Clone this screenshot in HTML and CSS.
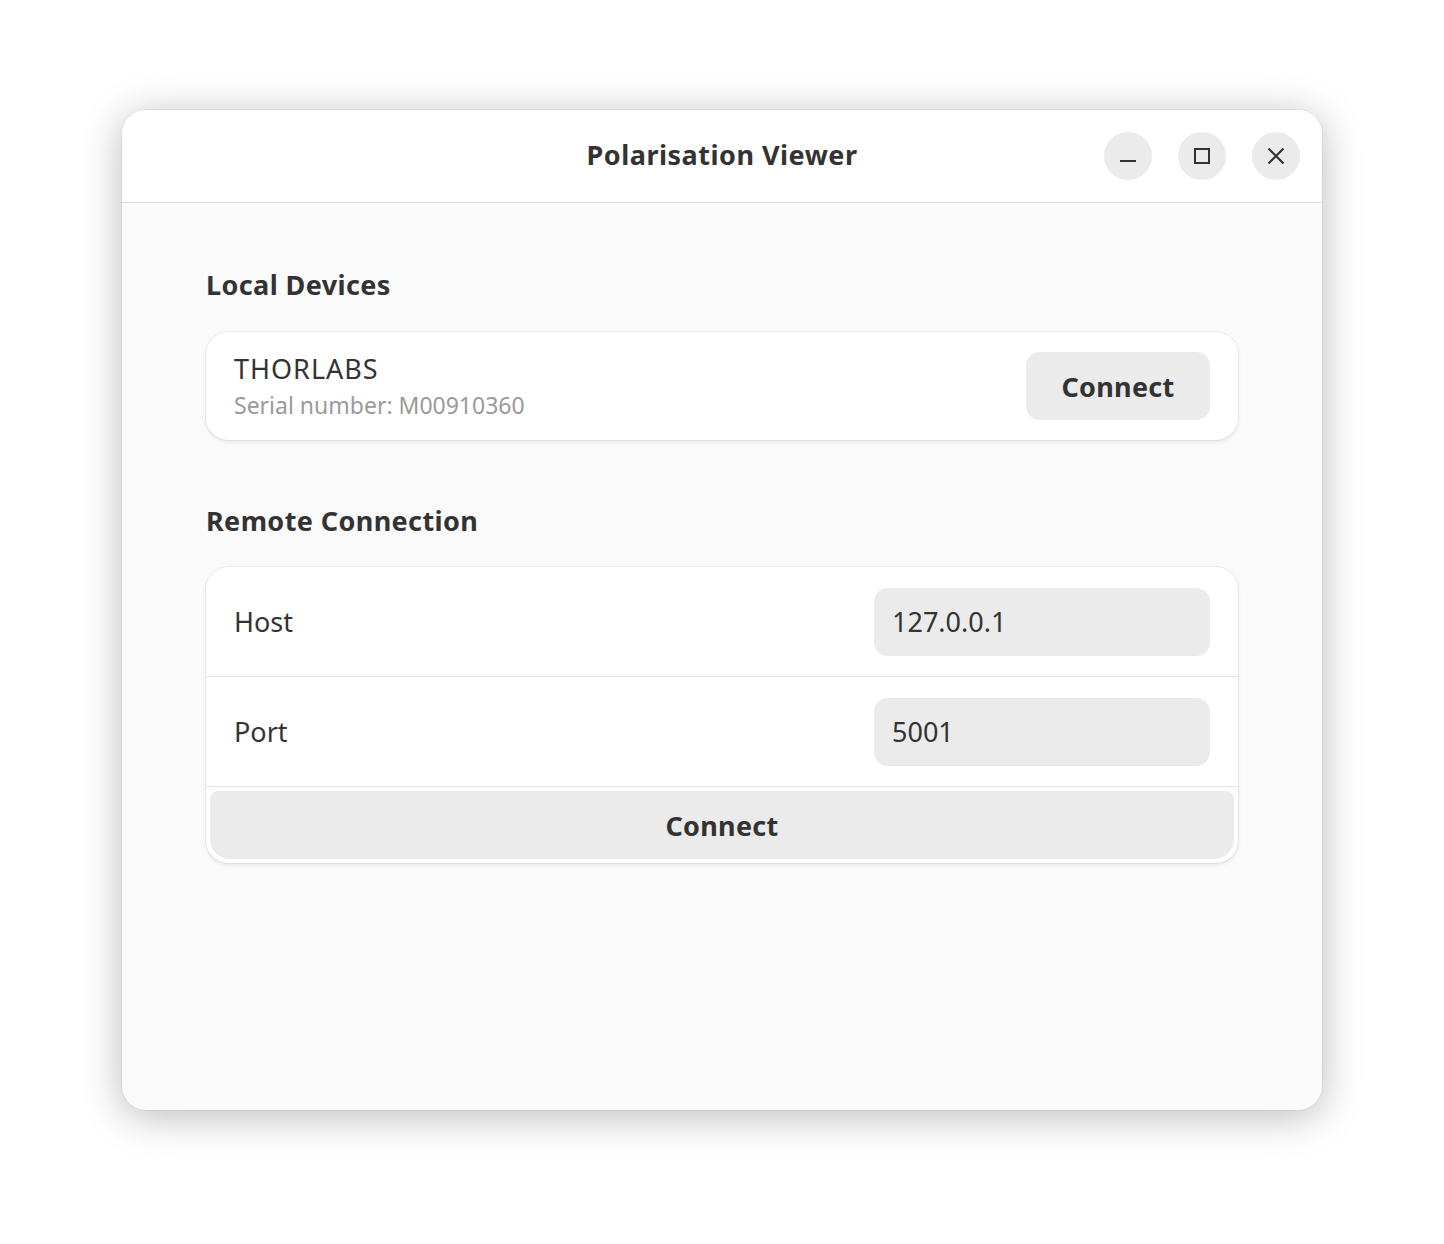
FILE: index.html
```html
<!DOCTYPE html>
<html>
<head>
<meta charset="utf-8">
<link rel="stylesheet" href="styles.css">
</head>
<body>
<div class="stage">
  <div class="window">
    <header class="titlebar">
      <div class="title">Polarisation Viewer</div>
      <div class="controls">
        <div class="wbtn"><svg width="24" height="24" viewBox="0 0 24 24"><path d="M4 17h16" stroke="#333" stroke-width="2" fill="none"/></svg></div>
        <div class="wbtn"><svg width="24" height="24" viewBox="0 0 24 24"><rect x="5" y="5" width="14" height="14" stroke="#333" stroke-width="2" fill="none"/></svg></div>
        <div class="wbtn"><svg width="24" height="24" viewBox="0 0 24 24"><path d="M4.5 4.5l15 15M19.5 4.5l-15 15" stroke="#333" stroke-width="2.2" fill="none"/></svg></div>
      </div>
    </header>
    <main class="content">
      <h2 class="heading">Local Devices</h2>
      <div class="card device">
        <div class="dev-info">
          <div class="dev-name">THORLABS</div>
          <div class="dev-sub">Serial number: M00910360</div>
        </div>
        <div class="btn">Connect</div>
      </div>
      <h2 class="heading heading2">Remote Connection</h2>
      <div class="card list">
        <div class="row">
          <div class="row-label">Host</div>
          <div class="entry">127.0.0.1</div>
        </div>
        <div class="row">
          <div class="row-label">Port</div>
          <div class="entry">5001</div>
        </div>
        <div class="row-btn">
          <div class="btn wide">Connect</div>
        </div>
      </div>
    </main>
  </div>
</div>
</body>
</html>
```

FILE: styles.css
```css
html, body {
  margin: 0;
  padding: 0;
  background: #ffffff;
}
body {
  width: 1444px;
  height: 1244px;
  font-family: "Noto Sans", "Open Sans", sans-serif;
  color: #333333;
}
.stage {
  padding: 110px 122px 134px 122px;
}
.window {
  width: 1200px;
  height: 1000px;
  border-radius: 24px;
  background: #fafafa;
  overflow: hidden;
  box-shadow: 0 6px 40px rgba(0,0,0,0.28), 0 0 0 1px rgba(0,0,0,0.04);
  display: flex;
  flex-direction: column;
}
.titlebar {
  height: 92px;
  background: #ffffff;
  border-bottom: 1px solid #dcdcdc;
  display: flex;
  align-items: center;
  justify-content: center;
  position: relative;
  flex-shrink: 0;
}
.title {
  font-size: 27px;
  font-weight: 700;
  color: #333;
  letter-spacing: 0.5px;
  margin-top: -4px;
}
.controls {
  position: absolute;
  right: 22px;
  top: 22px;
  display: flex;
  gap: 26px;
}
.wbtn {
  width: 48px;
  height: 48px;
  border-radius: 50%;
  background: #ebebeb;
  display: flex;
  align-items: center;
  justify-content: center;
}
.content {
  padding: 62px 84px 0 84px;
}
.heading {
  margin: 0;
  font-size: 27px;
  font-weight: 700;
  line-height: 40px;
  color: #333;
  letter-spacing: 0.4px;
}
.heading2 {
  margin-top: 61px;
}
.card {
  background: #ffffff;
  border-radius: 22px;
  box-shadow: 0 0 0 1px rgba(0,0,0,0.05), 0 2px 4px rgba(0,0,0,0.08);
  margin-top: 27px;
}
.device {
  height: 108px;
  display: flex;
  align-items: center;
  justify-content: space-between;
  padding: 0 28px;
}
.dev-name {
  font-size: 27px;
  line-height: 34px;
  color: #333;
  letter-spacing: 1px;
}
.dev-sub {
  font-size: 23px;
  line-height: 30px;
  color: #9a9a9a;
  margin-top: 4px;
}
.btn {
  background: #ebebeb;
  border-radius: 14px;
  height: 68px;
  width: 184px;
  display: flex;
  align-items: center;
  justify-content: center;
  font-size: 27px;
  font-weight: 700;
  color: #333;
  letter-spacing: 0.3px;
}
.list {
  overflow: hidden;
  margin-top: 26px;
}
.row {
  height: 109px;
  border-bottom: 1px solid #e6e6e6;
  display: flex;
  align-items: center;
  justify-content: space-between;
  padding: 0 28px;
}
.row-label {
  font-size: 27px;
  color: #333;
}
.entry {
  width: 336px;
  height: 68px;
  box-sizing: border-box;
  background: #ebebeb;
  border-radius: 14px;
  display: flex;
  align-items: center;
  padding-left: 18px;
  font-size: 27px;
  color: #333;
}
.row-btn {
  padding: 4px;
}
.btn.wide {
  width: auto;
  border-radius: 8px 8px 20px 20px;
}
```
